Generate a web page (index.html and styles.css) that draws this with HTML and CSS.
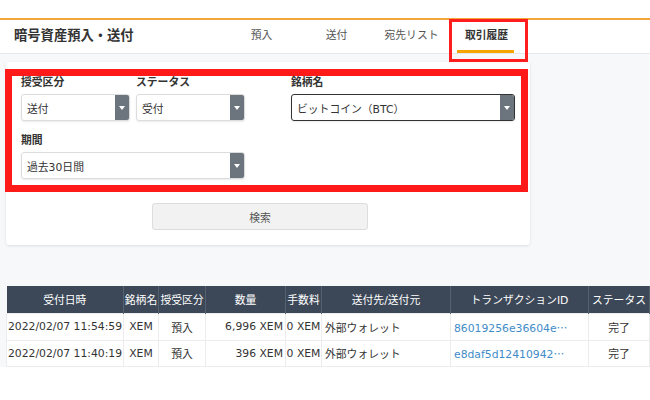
FILE: index.html
```html
<!DOCTYPE html>
<html lang="ja">
<head>
<meta charset="utf-8">
<title>暗号資産預入・送付</title>
<link rel="stylesheet" href="styles.css">
</head>
<body>
<div class="topspace"></div>
<header class="hdr">
  <h1 class="title">暗号資産預入・送付</h1>
  <nav class="tabs">
    <a class="tab">預入</a>
    <a class="tab">送付</a>
    <a class="tab">宛先リスト</a>
    <a class="tab active">取引履歴<span class="annot-tab"></span></a>
  </nav>
</header>
<main class="main">
  <section class="card">
    <div class="filters">
      <div class="row">
        <div class="pair">
          <div class="field f-small">
            <label class="lbl">授受区分</label>
            <div class="select"><span class="val">送付</span><span class="arrow"></span></div>
          </div>
          <div class="field f-small">
            <label class="lbl">ステータス</label>
            <div class="select"><span class="val">受付</span><span class="arrow"></span></div>
          </div>
        </div>
        <div class="field f-wide f-coin">
          <label class="lbl">銘柄名</label>
          <div class="select focused"><span class="val">ビットコイン（BTC）</span><span class="arrow"></span></div>
        </div>
      </div>
      <div class="row row2">
        <div class="field f-wide">
          <label class="lbl">期間</label>
          <div class="select"><span class="val">過去30日間</span><span class="arrow"></span></div>
        </div>
      </div>
    </div>
    <div class="actions"><button class="btn">検索</button></div>
  </section>
  <table class="tbl">
    <colgroup>
      <col class="c1"><col class="c2"><col class="c3"><col class="c4"><col class="c5"><col class="c6"><col class="c7"><col class="c8">
    </colgroup>
    <thead>
      <tr><th>受付日時</th><th>銘柄名</th><th>授受区分</th><th>数量</th><th>手数料</th><th>送付先/送付元</th><th>トランザクションID</th><th>ステータス</th></tr>
    </thead>
    <tbody>
      <tr><td class="ctr">2022/02/07 11:54:59</td><td class="ctr">XEM</td><td class="ctr">預入</td><td class="rt">6,996 XEM</td><td class="ctr">0 XEM</td><td class="lt">外部ウォレット</td><td class="lt"><a class="txid">86019256e36604e<span class="ell">…</span></a></td><td class="ctr">完了</td></tr>
      <tr><td class="ctr">2022/02/07 11:40:19</td><td class="ctr">XEM</td><td class="ctr">預入</td><td class="rt">396 XEM</td><td class="ctr">0 XEM</td><td class="lt">外部ウォレット</td><td class="lt"><a class="txid">e8daf5d12410942<span class="ell">…</span></a></td><td class="ctr">完了</td></tr>
    </tbody>
  </table>
</main>
</body>
</html>
```
FILE: styles.css
```css
* { box-sizing: border-box; }
body {
  margin: 0;
  font-family: "DejaVu Sans", "Noto Sans CJK JP", sans-serif;
  color: #333;
  background: #fff;
}
.topspace { height: 18px; }
.hdr {
  display: flex;
  height: 36px;
  border-top: 2px solid #f3a73b;
  border-bottom: 1px solid #e6e7ea;
  background: #fff;
}
.title {
  flex: 0 0 224px;
  margin: 0;
  padding-left: 14px;
  font-size: 13.3px;
  font-weight: bold;
  line-height: 31px;
  color: #333;
}
.tabs { display: flex; }
.tab {
  position: relative;
  width: 75px;
  text-align: center;
  font-size: 10.8px;
  line-height: 31px;
  color: #555;
}
.tab.active { font-weight: bold; color: #333; }
.tab.active::after {
  content: "";
  position: absolute;
  left: 8px;
  bottom: 0;
  width: 57px;
  height: 3px;
  background: #f5a400;
}
.annot-tab {
  position: absolute;
  left: 0;
  top: -1px;
  width: 79px;
  height: 43px;
  border: 3px solid #ff1e1e;
}
.main {
  background: #f7f8fa;
  padding: 8px 0 0 6px;
}
.card {
  width: 524px;
  background: #fff;
  border-radius: 3px;
  box-shadow: 0 1px 3px rgba(0,0,0,0.1);
  padding: 7px 0 15px 0;
}
.filters {
  margin-left: -1px;
  width: 523px;
  border: 7px solid #ff1a1a;
  padding: 0 6px 6px 9px;
}
.row { display: flex; }
.row2 { margin-top: 13px; }
.pair { display: flex; gap: 6px; width: 224px; }
.field { display: flex; flex-direction: column; }
.f-small { width: 109px; }
.f-wide { width: 224px; }
.f-coin { margin-left: 46px; }
.lbl {
  font-size: 10.8px;
  font-weight: bold;
  line-height: 14px;
  margin-bottom: 4px;
  color: #333;
}
.select {
  height: 27px;
  display: flex;
  align-items: center;
  border: 1px solid #dcdcdc;
  border-radius: 3px;
  box-shadow: 0 1px 2px rgba(0,0,0,0.08);
  overflow: hidden;
  font-size: 10.8px;
  color: #333;
}
.select.focused { border: 1.5px solid #333; }
.val { padding-left: 5px; flex: 1; white-space: nowrap; }
.arrow {
  align-self: stretch;
  width: 14px;
  background: #6c757d;
  display: flex;
  align-items: center;
  justify-content: center;
}
.arrow::before {
  content: "";
  border-left: 3px solid transparent;
  border-right: 3px solid transparent;
  border-top: 4px solid #fff;
}
.actions { padding-top: 11px; }
.btn {
  margin-left: 146px;
  width: 216px;
  height: 27px;
  background: #f2f2f2;
  border: 1px solid #dddddd;
  border-radius: 3px;
  font-family: inherit;
  font-size: 10.8px;
  color: #555;
}
.tbl {
  margin-top: 41px;
  width: 643px;
  table-layout: fixed;
  border-collapse: collapse;
  font-size: 10.8px;
}
.c1 { width: 117px; }
.c2 { width: 35px; }
.c3 { width: 47px; }
.c4 { width: 80px; }
.c5 { width: 36px; }
.c6 { width: 129px; }
.c7 { width: 138px; }
.c8 { width: 61px; }
.tbl th {
  height: 27px;
  padding: 0;
  background: #3c4858;
  color: #fff;
  font-weight: normal;
  white-space: nowrap;
  overflow: hidden;
  border-right: 1px solid #56616f;
}
.tbl td {
  height: 27px;
  padding: 0;
  background: #fff;
  color: #333;
  white-space: nowrap;
  overflow: hidden;
  border: 1px solid #ececec;
}
.tbl tbody tr:last-child td { height: 26px; }
.ctr { text-align: center; }
.rt { text-align: right; padding-right: 2px !important; }
.lt { text-align: left; padding-left: 3px !important; }
.txid { color: #3f8cc8; }
.ell { font-family: "Noto Sans CJK JP", sans-serif; }
```
